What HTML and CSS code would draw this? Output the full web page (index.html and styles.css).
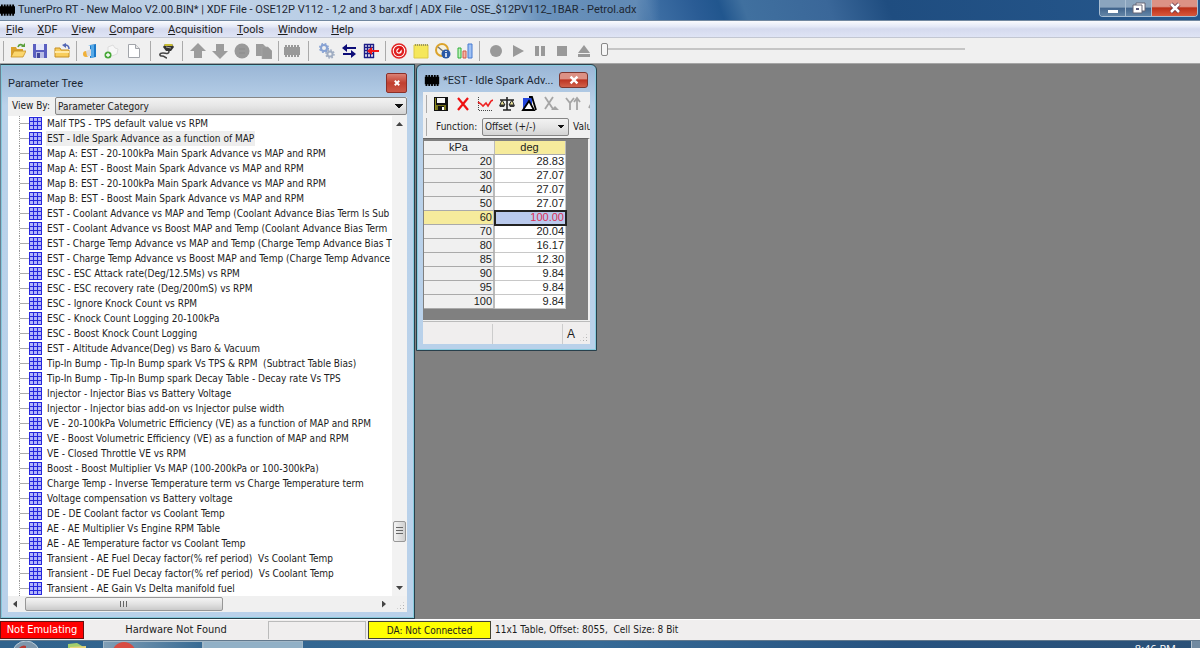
FILE: index.html
```html
<!DOCTYPE html>
<html lang="en">
<head>
<meta charset="utf-8">
<title>TunerPro RT</title>
<link rel="stylesheet" href="styles.css">
</head>
<body>
<svg class="defs" aria-hidden="true">
  <symbol id="chip" viewBox="0 0 16 14"><path d="M0 3h16v8H0zM1 1h2v12H1zM4 1h2v12H4zM7 1h2v12H7zM10 1h2v12h-2zM13 1h2v12h-2z" fill="currentColor"/></symbol>
</svg>
<div class="app">
  <header class="titlebar">
    <svg class="app-icon" viewBox="0 0 16 14"><use href="#chip"/></svg>
    <h1>TunerPro RT - New Maloo V2.00.BIN* | XDF File - OSE12P V112 - 1,2 and 3 bar.xdf | ADX File - OSE_$12PV112_1BAR - Petrol.adx</h1>
    <div class="caption">
      <button aria-label="Minimize"><svg viewBox="0 0 16 14"><path d="M3 9h10v3H3z" fill="#fff"/></svg></button>
      <button aria-label="Restore"><svg viewBox="0 0 16 14"><path d="M5 2h9v8H5z" fill="#fff" stroke="#667"/><path d="M2 4h9v8H2z" fill="#fff" stroke="#667"/><path d="M5 7h3v2H5z" fill="#557"/></svg></button>
      <button class="close" aria-label="Close"><svg viewBox="0 0 16 14"><path d="M4 3l8 8M12 3l-8 8" stroke="#634" stroke-width="4"/><path d="M4 3l8 8M12 3l-8 8" stroke="#fff" stroke-width="2.5"/></svg></button>
    </div>
  </header>

  <nav class="menubar">
    <button><u>F</u>ile</button><button><u>X</u>DF</button><button><u>V</u>iew</button><button><u>C</u>ompare</button><button><u>A</u>cquisition</button><button><u>T</u>ools</button><button><u>W</u>indow</button><button><u>H</u>elp</button>
  </nav>

  <div class="toolbar">
    <i class="sep first"></i>
    <button aria-label="Open"><svg viewBox="0 0 16 16"><path d="M1 14V4h5l1 2h6v8z" fill="#d9a12c"/><path d="M1 14l3-6h12l-3 6z" fill="#fbd66d" stroke="#c68f22" stroke-width=".8"/><path d="M8 4c1-3 4-3 5-1" stroke="#5a9f3a" stroke-width="1.6" fill="none"/><path d="M11 4h4V0z" fill="#5a9f3a"/></svg></button>
    <button aria-label="Save"><svg viewBox="0 0 16 16"><path d="M1 1h14v14H2l-1-1z" fill="#5a5fc0"/><path d="M4 1h8v6H4z" fill="#e3e6fa"/><path d="M4 9h8v6H4z" fill="#b9bde5"/><path d="M5 10h3v5H5z" fill="#42479c"/></svg></button>
    <button aria-label="Close file"><svg viewBox="0 0 16 16"><path d="M1 14V5h5l1 2h8v7z" fill="#f8cd5c" stroke="#c68f22"/><path d="M1 9h14" stroke="#ffe9a6" stroke-width="2"/><path d="M15 6c0-3-2-4-4-4" stroke="#5367b5" stroke-width="1.5" fill="none"/><path d="M12 0v5L8 2z" fill="#5367b5"/></svg></button>
    <i class="sep"></i>
    <button aria-label="Load definition"><svg viewBox="0 0 16 16"><path d="M8 2l6-1v13l-6 1z" fill="#1b78c8"/><path d="M6 2h6v12l-3 1V3z" fill="#56aae8"/><circle cx="4" cy="11" r="3" fill="#f0b038"/><path d="M4 8l5-2v7H5z" fill="#d9d9df"/></svg></button>
    <button aria-label="New definition"><svg viewBox="0 0 16 16"><path d="M4 4l5-2 2 3 3 1-1 5-5 2-4-3z" fill="#f7f7f7" stroke="#ddd"/><circle cx="4" cy="12" r="3.500" fill="#48a838"/><path d="M4 10v4M2 12h4" stroke="#fff" stroke-width="1.3"/></svg></button>
    <button aria-label="New"><svg viewBox="0 0 16 16"><path d="M2.500 1.500h7l4 4v9h-11z" fill="#fff" stroke="#a2a5aa"/><path d="M9.500 1.500v4h4" fill="#e6e6e6" stroke="#a2a5aa"/></svg></button>
    <i class="sep wide"></i>
    <button aria-label="Connect"><svg viewBox="0 0 16 16"><path d="M5 4l2-3h7l2 3-3 4H8z" fill="#333"/><path d="M7 1h7l1 2H6z" fill="#c8bc32"/><path d="M8 4l5 1" stroke="#aaa"/><path d="M11 8c0 4-3 2-6 2-4 0-4 3-1 3s3 2 5 2" fill="none" stroke="#444" stroke-width="1.600"/></svg></button>
    <i class="sep wide"></i>
    <button aria-label="Upload"><svg viewBox="0 0 16 16"><path d="M8 0l8 8h-4v7H4V8H0z" fill="#9c9c9c"/></svg></button>
    <button aria-label="Download"><svg viewBox="0 0 16 16"><path d="M8 16L0 8h4V1h8v7h4z" fill="#9c9c9c"/></svg></button>
    <button aria-label="Verify"><svg viewBox="0 0 16 16"><circle cx="8" cy="8" r="7.500" fill="#999"/><path d="M5 6h6M5 10h6" stroke="#8b8b8b"/></svg></button>
    <button aria-label="Copy"><svg viewBox="0 0 16 16"><path d="M0 1h7l3 3v9H0z" fill="#9c9c9c"/><path d="M6 4h6l4 4v8H6z" fill="#989898" stroke="#aaa" stroke-width=".6"/></svg></button>
    <i class="sep"></i>
    <button class="grey" aria-label="Chip"><svg viewBox="0 0 16 14"><use href="#chip"/></svg></button>
    <i class="sep wide"></i>
    <i class="gap"></i>
    <button aria-label="Settings"><svg viewBox="0 0 16 16"><circle cx="5" cy="5" r="3" fill="none" stroke="#87a2d3" stroke-width="2"/><circle cx="5" cy="5" r="4.300" fill="none" stroke="#87a2d3" stroke-width="1.500" stroke-dasharray="1.800 1.600"/><circle cx="11" cy="11" r="2.600" fill="none" stroke="#a0adc2" stroke-width="2"/><circle cx="11" cy="11" r="4" fill="none" stroke="#a0adc2" stroke-width="1.500" stroke-dasharray="1.700 1.400"/></svg></button>
    <button aria-label="Swap"><svg viewBox="0 0 16 16"><path d="M1 5l5-4v3h9v2H6v3z" fill="#0c0c78"/><path d="M15 11l-5 4v-3H2v-2h8V7z" fill="#0c0c78"/></svg></button>
    <button aria-label="Import table"><svg viewBox="0 0 16 16"><path d="M1 1h10v14H1z" fill="#fff"/><path d="M1.500 1v14M4.500 1v14M7.500 1v14M10.500 1v14M1 1.500h10M1 4.500h10M1 7.500h10M1 10.500h10M1 14.500h10" stroke="#1c1c88" stroke-width="1.400"/><path d="M4 8l5-4v3h7v2H9v3z" fill="#f01818"/></svg></button>
    <i class="sep"></i>
    <button aria-label="Dashboard"><svg viewBox="0 0 16 16"><circle cx="8" cy="8" r="7" fill="#fff" stroke="#e02424" stroke-width="1.600"/><circle cx="8" cy="8" r="4" fill="none" stroke="#df2020" stroke-width="2.500"/><path d="M7 9l4-5" stroke="#d11" stroke-width="2.500"/></svg></button>
    <button aria-label="Notes"><svg viewBox="0 0 16 16"><path d="M1 2h14v13H1z" fill="#f5e75a" stroke="#ddca45"/><path d="M2 2h13" stroke="#9c985c" stroke-width="2" stroke-dasharray="1 1"/></svg></button>
    <button aria-label="Monitor"><svg viewBox="0 0 16 16"><circle cx="7" cy="7" r="6" fill="#f6f1df" stroke="#dba32c" stroke-width="2"/><path d="M3 4l6 5" stroke="#777" stroke-width="1.500"/><circle cx="11" cy="11" r="4.500" fill="#2857a5"/><path d="M11 8v1M11 10v4" stroke="#fff" stroke-width="1.500"/></svg></button>
    <button aria-label="Charts"><svg viewBox="0 0 16 16"><path d="M1 5h3v10H1z" fill="#c0f1bd" stroke="#2cae36"/><path d="M6 8h3v7H6z" fill="#f6b8a8" stroke="#d25944"/><path d="M11 1h4v14h-4z" fill="#9fc1f4" stroke="#477bd1"/></svg></button>
    <i class="sep"></i>
    <i class="gap"></i>
    <button aria-label="Record"><svg viewBox="0 0 16 16"><circle cx="8" cy="8" r="6" fill="#999"/></svg></button>
    <button aria-label="Play"><svg viewBox="0 0 16 16"><path d="M3 2l11 6-11 6z" fill="#999"/></svg></button>
    <button aria-label="Pause"><svg viewBox="0 0 16 16"><path d="M3 3h4v10H3zM9 3h4v10H9z" fill="#999"/></svg></button>
    <button aria-label="Stop"><svg viewBox="0 0 16 16"><path d="M3 3h10v10H3z" fill="#999"/></svg></button>
    <button aria-label="Eject"><svg viewBox="0 0 16 16"><path d="M8 2l6 8H2zM2 11h12v3H2z" fill="#999"/></svg></button>
    <input class="seek" type="range" min="0" max="100" value="0" aria-label="Playback position">
  </div>

  <main class="workspace">
    <section class="window tree-window">
      <div class="window-title"><h2>Parameter Tree</h2><button class="close-small" aria-label="Close"><svg viewBox="0 0 16 14"><path d="M5 4l6 6M11 4l-6 6" stroke="#fff" stroke-width="2.500"/></svg></button></div>
      <div class="view-by"><label for="view">View By:</label><select id="view"><option>Parameter Category</option></select></div>
      <div class="tree-area">
        <ul class="tree">
          <li>Malf TPS - TPS default value vs RPM</li>
          <li><span class="current">EST - Idle Spark Advance as a function of MAP</span></li>
          <li>Map A: EST - 20-100kPa Main Spark Advance vs MAP and RPM</li>
          <li>Map A: EST - Boost Main Spark Advance vs MAP and RPM</li>
          <li>Map B: EST - 20-100kPa Main Spark Advance vs MAP and RPM</li>
          <li>Map B: EST - Boost Main Spark Advance vs MAP and RPM</li>
          <li>EST - Coolant Advance vs MAP and Temp (Coolant Advance Bias Term Is Sub</li>
          <li>EST - Coolant Advance vs Boost MAP and Temp (Coolant Advance Bias Term</li>
          <li>EST - Charge Temp Advance vs MAP and Temp (Charge Temp Advance Bias T</li>
          <li>EST - Charge Temp Advance vs Boost MAP and Temp (Charge Temp Advance</li>
          <li>ESC - ESC Attack rate(Deg/12.5Ms) vs RPM</li>
          <li>ESC - ESC recovery rate (Deg/200mS) vs RPM</li>
          <li>ESC - Ignore Knock Count vs RPM</li>
          <li>ESC - Knock Count Logging 20-100kPa</li>
          <li>ESC - Boost Knock Count Logging</li>
          <li>EST - Altitude Advance(Deg) vs Baro &amp; Vacuum</li>
          <li>Tip-In Bump - Tip-In Bump spark Vs TPS &amp; RPM  (Subtract Table Bias)</li>
          <li>Tip-In Bump - Tip-In Bump spark Decay Table - Decay rate Vs TPS</li>
          <li>Injector - Injector Bias vs Battery Voltage</li>
          <li>Injector - Injector bias add-on vs Injector pulse width</li>
          <li>VE - 20-100kPa Volumetric Efficiency (VE) as a function of MAP and RPM</li>
          <li>VE - Boost Volumetric Efficiency (VE) as a function of MAP and RPM</li>
          <li>VE - Closed Throttle VE vs RPM</li>
          <li>Boost - Boost Multiplier Vs MAP (100-200kPa or 100-300kPa)</li>
          <li>Charge Temp - Inverse Temperature term vs Charge Temperature term</li>
          <li>Voltage compensation vs Battery voltage</li>
          <li>DE - DE Coolant factor vs Coolant Temp</li>
          <li>AE - AE Multiplier Vs Engine RPM Table</li>
          <li>AE - AE Temperature factor vs Coolant Temp</li>
          <li>Transient - AE Fuel Decay factor(% ref period)  Vs Coolant Temp</li>
          <li>Transient - DE Fuel Decay factor(% ref period)  Vs Coolant Temp</li>
          <li>Transient - AE Gain Vs Delta manifold fuel</li>
        </ul>
        <div class="vscroll"><i class="arrow up"></i><i class="track-before"></i><i class="thumb"></i><i class="track-after"></i><i class="arrow down"></i></div>
        <div class="hscroll"><i class="arrow left"></i><i class="thumb"></i><i class="space"></i><i class="arrow right"></i></div>
        <div class="grip"></div>
      </div>
    </section>

    <section class="window table-window">
      <div class="window-title"><svg class="chip" viewBox="0 0 16 14"><use href="#chip"/></svg><h2>*EST - Idle Spark Adv...</h2><button class="close-wide" aria-label="Close"><svg viewBox="0 0 16 14"><path d="M4 3l8 8M12 3l-8 8" stroke="#fff" stroke-width="2.800"/></svg></button></div>
      <div class="table-body">
        <div class="tools">
          <i class="sep first"></i>
          <button aria-label="Save table"><svg viewBox="0 0 16 16"><path d="M1 1h14v14H1z" fill="#111"/><path d="M2 2h1v12H2z" fill="#8d8a1c"/><path d="M4 2h8v5H4z" fill="#f5f5f5"/><path d="M3 9h10v5H3z" fill="#77741a"/><path d="M5 10h6v5H5z" fill="#111"/><path d="M9 11h2v3H9z" fill="#fff"/></svg></button>
          <button aria-label="Discard"><svg viewBox="0 0 16 16"><path d="M3 2l10 12M13 2L3 14" stroke="#ee1111" stroke-width="2.200"/></svg></button>
          <button aria-label="Graph"><svg viewBox="0 0 16 16"><path d="M1.500 1v13.500H16" stroke="#444" stroke-dasharray="1 1" fill="none"/><path d="M1 6l3 2 2 2 3-3 2 3 3-5 2-1" stroke="#e22" stroke-width="1.600" fill="none"/></svg></button>
          <button aria-label="Compare"><svg viewBox="0 0 16 16"><path d="M8 1v13M4 14h8M1 4h14" stroke="#222" stroke-width="1.600"/><path d="M3 4L1 9h5zM13 4l-3 5h5z" fill="#eee59a" stroke="#222"/><path d="M0 9h6l-1 2H1zM10 9h6l-1 2h-4z" fill="#333"/></svg></button>
          <button aria-label="Difference"><svg viewBox="0 0 16 16"><path d="M2 2h9v11H2z" fill="#2447dd"/><path d="M2 14l6-9 5 9z" fill="#fff" stroke="#000" stroke-width="1.800"/><path d="M8 1h3l4 13" stroke="#000" stroke-width="1.800" fill="none"/></svg></button>
          <button aria-label="X axis"><svg viewBox="0 0 16 16"><path d="M2 1l8 12M10 1L2 13" stroke="#a5a5a5" stroke-width="1.800"/><path d="M8 14h8l-4-4z" fill="#a5a5a5"/></svg></button>
          <button aria-label="Y axis"><svg viewBox="0 0 16 16"><path d="M1 2l4 5 4-5M5 7v7M12 14V3M9 6l3-4 3 4" stroke="#a5a5a5" stroke-width="1.800" fill="none"/></svg></button>
          <button aria-label="Z axis"><svg viewBox="0 0 16 16"><path d="M2 12l4-8 4 8" stroke="#a5a5a5" stroke-width="1.800" fill="none"/></svg></button>
        </div>
        <div class="tools functions"><i class="sep first"></i><label for="fn">Function:</label><select id="fn"><option>Offset (+/-)</option></select><span>Value:</span></div>
        <div class="grid">
          <table>
            <thead><tr><th>kPa</th><th class="picked">deg</th></tr></thead>
            <tbody>
              <tr><th>20</th><td>28.83</td></tr>
              <tr><th>30</th><td>27.07</td></tr>
              <tr><th>40</th><td>27.07</td></tr>
              <tr><th>50</th><td>27.07</td></tr>
              <tr><th class="picked">60</th><td class="selected">100.00</td></tr>
              <tr><th>70</th><td>20.04</td></tr>
              <tr><th>80</th><td>16.17</td></tr>
              <tr><th>85</th><td>12.30</td></tr>
              <tr><th>90</th><td>9.84</td></tr>
              <tr><th>95</th><td>9.84</td></tr>
              <tr><th>100</th><td>9.84</td></tr>
            </tbody>
          </table>
        </div>
        <div class="table-status"><span></span><span></span><span>A</span><i class="grip"></i></div>
      </div>
    </section>
  </main>

  <footer class="statusbar">
    <span class="emulating">Not Emulating</span>
    <span class="hardware">Hardware Not Found</span>
    <span class="blank"></span>
    <span class="da">DA: Not Connected</span>
    <span class="info">11x1 Table, Offset: 8055,&nbsp; Cell Size: 8 Bit</span>
  </footer>
  <div class="taskbar">
    <div class="launch">
      <svg viewBox="0 0 100 8"><circle cx="26" cy="14" r="14" fill="#7e97ac" stroke="#b9cbd8"/><path d="M18 8q4-5 8-3v3z" fill="#b63b35"/><path d="M68 3l9-1 10 6H68z" fill="#a4cf6c"/><path d="M70 6l16-1v3H70z" fill="#e8d67a"/></svg>
    </div>
    <div class="task"><svg viewBox="0 0 40 8"><circle cx="20" cy="12" r="12" fill="#d84c42"/></svg></div>
    <div class="task bright"></div>
    <span class="clock">8:46 PM</span>
    <i class="peek"></i>
  </div>
</div>
</body>
</html>
```
FILE: styles.css
```css
* { box-sizing: border-box; }
body { margin: 0; font: 10px/15px "DejaVu Sans Condensed", "DejaVu Sans", sans-serif; color: #1c1c1c; }
button, select, input { font: inherit; color: inherit; margin: 0; padding: 0; border: 0; background: none; border-radius: 0; }
h1, h2, ul { margin: 0; padding: 0; font-weight: normal; }
.defs { position: absolute; width: 0; height: 0; }
.app { display: flex; flex-direction: column; height: 100vh; overflow: hidden; background: #808080; }

.titlebar {
  flex: none; display: flex; align-items: center; height: 21px; padding-right: 2px;
  background:
    linear-gradient(90deg, #a9c1dc 0, #c3d4e8 16%, #b4cbe4 32%, #a6c2de 41%, rgba(115,153,193,.9) 45%, rgba(110,148,188,.8) 53%, rgba(60,110,160,0) 55%),
    linear-gradient(70deg, #235a92 52%, #3f70a5 54%, #2a5c95 58%, #21568e 60%, #40709f 62%, #3a6799 69%, #1f4d80 74%, #26588d 100%);
  border-bottom: 1px solid #71879f;
}
.app-icon { width: 15px; height: 14px; color: #000; }
.titlebar h1 { flex: 1; padding-left: 3px; font: 11px/22px Roboto, "Open Sans", sans-serif; color: #1d2733; white-space: nowrap; overflow: hidden; }
.caption { display: flex; align-self: flex-start; border: 1px solid #a9bed2; border-top: 0; border-radius: 0 0 4px 4px; overflow: hidden; }
.caption button { display: flex; align-items: center; justify-content: center; width: 26px; height: 16px; background: linear-gradient(#8ba5be 45%, #40648c 50%, #6486a7); border-right: 1px solid #a9bed2; }
.caption svg { width: 16px; height: 14px; }
.caption .close { width: 45px; border: 0; background: linear-gradient(#dc9285 40%, #bb3019 50%, #d8583c); }

.menubar { flex: none; display: flex; gap: 14px; height: 17px; padding-left: 6px; background: linear-gradient(#fafbfe, #e4e8f6 35%, #d5daee 50%, #dfe4f5); border-bottom: 1px solid #c3c7d2; }
.menubar button { font: 11px/18px Roboto, "Open Sans", sans-serif; }

.toolbar { flex: none; display: flex; align-items: center; height: 26px; background: #f0f0f0; border-bottom: 1px solid #a5a5a5; }
.toolbar button, .tools button { flex: none; display: flex; align-items: center; justify-content: center; width: 22px; height: 22px; }
.toolbar svg, .tools svg { width: 16px; height: 16px; }
.grey { color: #999; }
.sep { flex: none; width: 6px; height: 20px; background: linear-gradient(#aaa, #aaa) center / 1px 100% no-repeat; }
.sep.first { width: 7px; }
.sep.wide { width: 10px; }
.gap { flex: none; width: 3px; }
.seek { -webkit-appearance: none; appearance: none; flex: 0 1 364px; height: 16px; margin: 0 8px 3px 6px; background: linear-gradient(#c5c5c5, #c5c5c5) center / 100% 2px no-repeat; }
.seek::-webkit-slider-thumb { -webkit-appearance: none; width: 7px; height: 13px; background: #f6f6f6; border: 1px solid #888; border-radius: 2px; }

.workspace { flex: 1; min-height: 0; display: flex; align-items: flex-start; gap: 1px; background: #808080; }
.window { border: 1px solid #28404c; box-shadow: inset 0 0 0 1px #86c9dc; background: linear-gradient(#9ab6d6, #bad2ea 40px, #b9d1ea); padding: 0 7px 6px; }
.window-title { display: flex; align-items: center; }
.tree-window { flex: none; width: 415px; height: 100%; display: flex; flex-direction: column; border-left-color: #6a7e90; }
.tree-window .window-title { height: 32px; padding-top: 4px; justify-content: space-between; }
.window h2 { font-family: Roboto, "Open Sans", sans-serif; font-size: 11px; color: #1b2733; white-space: nowrap; }
.close-small { width: 21px; height: 20px; border: 1px solid #8c3029; border-radius: 2px; background: linear-gradient(#db8174, #c13f30 50%, #cb5848); }
.close-small svg, .close-wide svg { display: block; width: 14px; height: 12px; margin: auto; }
.close-small svg { width: 12px; }
.view-by { display: flex; align-items: flex-start; height: 19px; padding-left: 4px; background: #f0f0f0; }
.view-by label { width: 43px; line-height: 18px; white-space: nowrap; }
select {
  -webkit-appearance: none; appearance: none; height: 18px; border: 1px solid #868686; border-radius: 2px; padding: 0 2px;
  background:
    linear-gradient(45deg, transparent 50%, #111 50%) right 7px center / 4px 4px no-repeat,
    linear-gradient(315deg, transparent 50%, #111 50%) right 3px center / 4px 4px no-repeat,
    linear-gradient(#f2f2f2, #e6e6e6 50%, #d4d4d4);
}
.view-by select { flex: 1; }

.tree-area { flex: 1; min-height: 0; display: grid; grid-template: minmax(0, 1fr) 16px / minmax(0, 1fr) 15px; background: #f0f0f0; }
.tree { list-style: none; overflow: hidden; background: #fff; padding-left: 11px; }
.tree li { display: flex; align-items: center; height: 15px; white-space: pre; border-left: 1px dotted #999; }
.tree li::before {
  content: ""; flex: none; width: 22px; height: 13px; margin-right: 5px;
  background:
    repeating-linear-gradient(90deg, #2727dc 0 1px, transparent 1px 4px) right center / 13px 13px no-repeat,
    repeating-linear-gradient(#2727dc 0 1px, transparent 1px 4px) right center / 13px 13px no-repeat,
    linear-gradient(#b3b6fa, #b3b6fa) right center / 13px 13px no-repeat,
    linear-gradient(#aaa, #aaa) left center / 9px 1px no-repeat;
}
.current { background: #eee; margin-left: -1px; padding: 0 1px; }
.vscroll { display: flex; flex-direction: column; align-items: center; padding: 6px 0; background: #f2f2f2; }
.arrow { flex: none; width: 7px; height: 4px; background: #444; }
.up { clip-path: polygon(50% 0, 100% 100%, 0 100%); }
.down { clip-path: polygon(0 0, 100% 0, 50% 100%); }
.left { width: 4px; height: 7px; clip-path: polygon(0 50%, 100% 0, 100% 100%); }
.right { width: 4px; height: 7px; clip-path: polygon(0 0, 100% 50%, 0 100%); }
.thumb { flex: none; border: 1px solid #979797; border-radius: 2px; }
.track-before { flex: 394; }
.track-after { flex: 44; }
.vscroll .thumb { width: 13px; height: 21px; background: repeating-linear-gradient(#666 0 1px, transparent 1px 3px) center / 7px 8px no-repeat, linear-gradient(90deg, #f4f4f4, #d0d0d0); }
.hscroll { display: flex; align-items: center; padding: 0 6px 0 5px; background: #f0f0f0; }
.hscroll .thumb { width: 53%; height: 14px; margin-left: 8px; background: repeating-linear-gradient(90deg, #666 0 1px, transparent 1px 3px) center / 8px 6px no-repeat, linear-gradient(#f4f4f4, #e2e2e2 50%, #cacaca); }
.space { flex: 1; }
.grip { align-self: end; justify-self: end; width: 9px; height: 9px; margin: 2px; background: radial-gradient(#b0b0b0 1px, transparent 1px) 0 0 / 3px 3px; clip-path: polygon(100% 0, 100% 100%, 0 100%); }

.table-window { flex: none; width: 181px; border-radius: 6px 6px 0 0; padding: 0 6px; }
.table-window .window-title { height: 27px; padding: 3px 2px 0 1px; color: #000; }
.chip { flex: none; width: 16px; height: 13px; }
.table-window h2 { flex: 1; min-width: 0; padding-left: 3px; overflow: hidden; }
.close-wide { flex: none; width: 29px; height: 16px; border: 1px solid #7d3730; border-radius: 3px; background: linear-gradient(#dc9185 40%, #bd3523 50%, #d1614b); }
.table-body { margin-bottom: 6px; background: #f0f0f0; }
.tools { display: flex; align-items: center; height: 23px; overflow: hidden; }
.functions { height: 23px; white-space: nowrap; }
.tools .sep.first { height: 18px; }
.functions label { flex: none; width: 46px; margin-left: 6px; }
.functions select { flex: none; width: 87px; margin-right: 4px; }
.grid { height: 182px; padding: 2px 1px 1px; background: #808080; border-right: 2px solid #f0f0f0; border-top: 1px solid #666; }
table { border-collapse: separate; border-spacing: 0; table-layout: fixed; width: 142px; font: 11px/13px "Liberation Sans", sans-serif; }
th, td { height: 14px; padding: 0 1px 0 0; text-align: right; font-weight: normal; border-bottom: 1px solid #c8c8c8; border-right: 1px solid #c8c8c8; }
th { background: #f0f0f0; border-right: 2px solid #bbb; border-bottom-color: #aaa; }
td { background: #fff; }
thead th { text-align: center; border-right-width: 1px; }
.picked { background: #f6eb9c; }
.selected { background: #b9c9ec; color: #dc2f56; outline: 2px solid #222; outline-offset: -1px; }
.table-status { display: flex; height: 23px; margin-top: 1px; padding-top: 2px; border-top: 1px solid #bbb; font: 12px/20px "Liberation Sans", sans-serif; background: #f0eeee; }
.table-status span { width: 70px; border-right: 1px solid #ccc; }
.table-status span:nth-child(3) { flex: 1; border: 0; padding-left: 4px; }

.statusbar { flex: none; display: flex; align-items: center; height: 21px; background: #f0eeee; border-top: 1px solid #fff; white-space: nowrap; }
.statusbar span { height: 18px; line-height: 18px; text-align: center; }
.statusbar .emulating { width: 84px; background: #f00; color: #fff; border: 1px solid #611; line-height: 16px; font-size: 11px; }
.statusbar .hardware { width: 185px; border-right: 1px solid #bbb; font-size: 11px; }
.statusbar .blank { width: 97px; margin-right: 2px; border: 1px solid #bbb; border-width: 1px 1px 0 0; }
.statusbar .da { width: 123px; background: #ff0; border: 1px solid #443; }
.statusbar .info { padding-left: 4px; }

.taskbar { flex: none; display: flex; height: 8px; overflow: hidden; background: linear-gradient(90deg, #31638d, #356995 50%, #27527f 75%, #2b5177); border-top: 1px solid #62788c; }
.launch { width: 103px; }
.launch svg { display: block; width: 100px; height: 8px; }
.task { width: 100px; background: linear-gradient(90deg, #809eb5, #376a93); border: 1px solid #a1b7c7; border-width: 1px 1px 0; }
.task svg { display: block; width: 40px; height: 8px; }
.bright { background: #91b0c6; }
.clock { margin-left: auto; padding-right: 15px; font: 11px/15px "Open Sans", sans-serif; color: #fff; }
.peek { width: 9px; background: #718aa1; border-left: 1px solid #b4c1cc; }
```
